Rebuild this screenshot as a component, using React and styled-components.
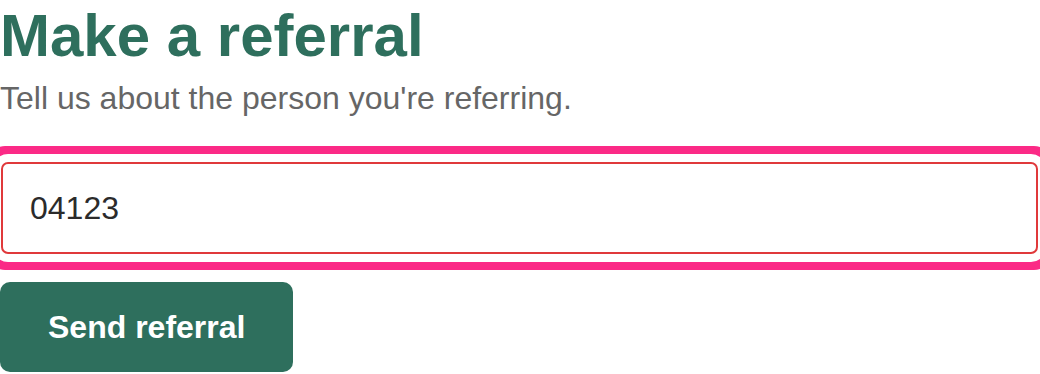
import React from "react";
import styled, { createGlobalStyle } from "styled-components";

const GlobalStyle = createGlobalStyle`
  html, body { margin: 0; padding: 0; background: #ffffff; }
  body { font-family: "Liberation Sans", Arial, sans-serif; overflow: hidden; }
  * { box-sizing: border-box; }
`;

const Page = styled.main`
  display: flex;
  flex-direction: column;
  align-items: flex-start;
  width: 1040px;
`;

const Heading = styled.h1`
  margin: 0;
  font-size: 60px;
  line-height: 72px;
  font-weight: 700;
  color: #2e6f5d;
`;

const Lead = styled.p`
  margin: 2px 0 0;
  font-size: 32px;
  line-height: 48px;
  color: #666666;
`;

const Field = styled.input`
  display: block;
  margin: 40px 0 0 1px;
  width: 1037px;
  height: 92px;
  padding: 0 27px;
  border: 2px solid #e0393b;
  border-radius: 7px;
  font-family: "Liberation Sans", Arial, sans-serif;
  font-size: 32px;
  color: #2b2b2b;
  background: #ffffff;
  outline: none;
  box-shadow: 0 0 0 8px #ffffff, 0 0 0 16px #fb2a86;
`;

const Button = styled.button`
  margin-top: 28px;
  height: 90px;
  padding: 0 48px;
  border: none;
  border-radius: 10px;
  background: #2e6f5d;
  color: #ffffff;
  font-family: "Liberation Sans", Arial, sans-serif;
  font-size: 32px;
  font-weight: 700;
  cursor: pointer;
`;

export default function App() {
  return (
    <>
      <GlobalStyle />
      <Page>
        <Heading>Make a referral</Heading>
        <Lead>Tell us about the person you're referring.</Lead>
        <Field type="text" defaultValue="04123" aria-label="Reference number" />
        <Button type="button">Send referral</Button>
      </Page>
    </>
  );
}
